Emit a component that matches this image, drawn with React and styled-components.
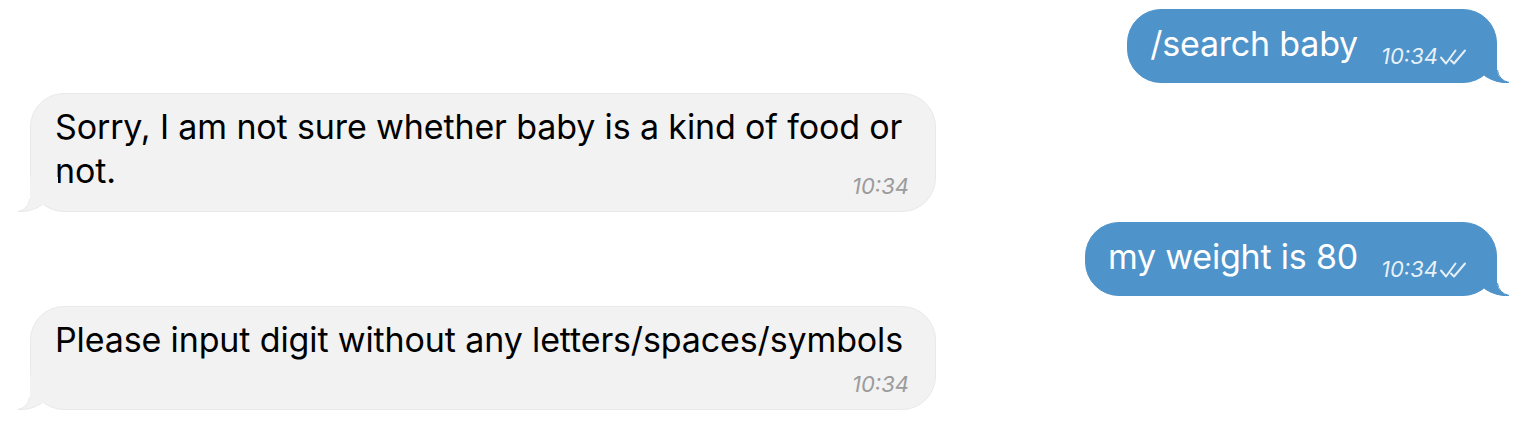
import React from "react";
import styled, { createGlobalStyle } from "styled-components";

const GlobalStyle = createGlobalStyle`
  html, body {
    margin: 0;
    padding: 0;
    background: #ffffff;
    font-family: Inter, "Noto Sans", "Liberation Sans", sans-serif;
  }
`;

const Chat = styled.div`
  display: flex;
  flex-direction: column;
  gap: 10px;
  padding: 9px 29px 10px 30px;
`;

const Row = styled.div`
  display: flex;
  justify-content: ${(p) => (p.$out ? "flex-end" : "flex-start")};
`;

const Bubble = styled.div`
  position: relative;
  display: flow-root;
  box-sizing: border-box;
  max-width: 906px;
  padding: ${(p) => (p.$out ? "12px 29px 14px 22px" : "11px 26px 13px 24px")};
  border-radius: 34px;
  background: ${(p) => (p.$out ? "#4e93ca" : "#f2f2f2")};
  border: 1px solid ${(p) => (p.$out ? "#4e93ca" : "#e9e9e9")};
  color: ${(p) => (p.$out ? "#ffffff" : "#000000")};
  font-size: 34px;
  line-height: 44px;
  letter-spacing: ${(p) => (p.$out ? "-0.2px" : "-0.13px")};
`;

const Text = styled.span``;

const Meta = styled.span`
  float: right;
  display: flex;
  align-items: center;
  margin-left: 23px;
  margin-top: ${(p) => (p.$below ? "10px" : p.$out ? "22px" : "25px")};
  clear: ${(p) => (p.$below ? "both" : "none")};
  font-size: 22px;
  line-height: 24px;
  letter-spacing: 0;
  font-style: italic;
  color: ${(p) => (p.$out ? "rgba(255,255,255,0.88)" : "#9b9b9b")};
`;

const Checks = styled.svg`
  width: 29px;
  height: 16px;
  margin-top: 1px;
`;

const Tail = styled.svg`
  position: absolute;
  bottom: -1px;
  width: 40px;
  height: 35px;
  ${(p) =>
    p.$out
      ? "right: -13px;"
      : "left: -13px; transform: scaleX(-1);"}
`;

function BubbleTail({ out }) {
  const fill = out ? "#4e93ca" : "#f2f2f2";
  const stroke = out ? "#4e93ca" : "#e9e9e9";
  return (
    <Tail $out={out} viewBox="0 0 40 35" aria-hidden="true">
      <path
        d="M0 0 H28 V22 Q29 32 40 34.5 Q28 35.5 16 28 L0 20 Z"
        fill={fill}
      />
      <path
        d="M28.5 22 Q29.5 32 40 34.5 Q28 35.5 16 28"
        fill="none"
        stroke={stroke}
        strokeWidth="1"
      />
    </Tail>
  );
}

function ReadChecks() {
  return (
    <Checks viewBox="0 0 29 16" aria-hidden="true">
      <path
        d="M3 8.5 L8 14.5 L17.5 1.5 M13 11.5 L16 14.5 L27 1.5"
        fill="none"
        stroke="rgba(255,255,255,0.85)"
        strokeWidth="2"
        strokeLinecap="round"
        strokeLinejoin="round"
      />
    </Checks>
  );
}

function Message({ out, text, time, below }) {
  return (
    <Row $out={out}>
      <Bubble $out={out}>
        <Text>{text}</Text>
        <Meta $out={out} $below={below}>
          {time}
          {out && <ReadChecks />}
        </Meta>
        <BubbleTail out={out} />
      </Bubble>
    </Row>
  );
}

const messages = [
  { out: true, text: "/search baby", time: "10:34" },
  {
    out: false,
    text: "Sorry, I am not sure whether baby is a kind of food or not.",
    time: "10:34",
  },
  { out: true, text: "my weight is 80", time: "10:34" },
  {
    out: false,
    text: "Please input digit without any letters/spaces/symbols",
    time: "10:34",
    below: true,
  },
];

export default function App() {
  return (
    <>
      <GlobalStyle />
      <Chat>
        {messages.map((m, i) => (
          <Message key={i} {...m} />
        ))}
      </Chat>
    </>
  );
}
